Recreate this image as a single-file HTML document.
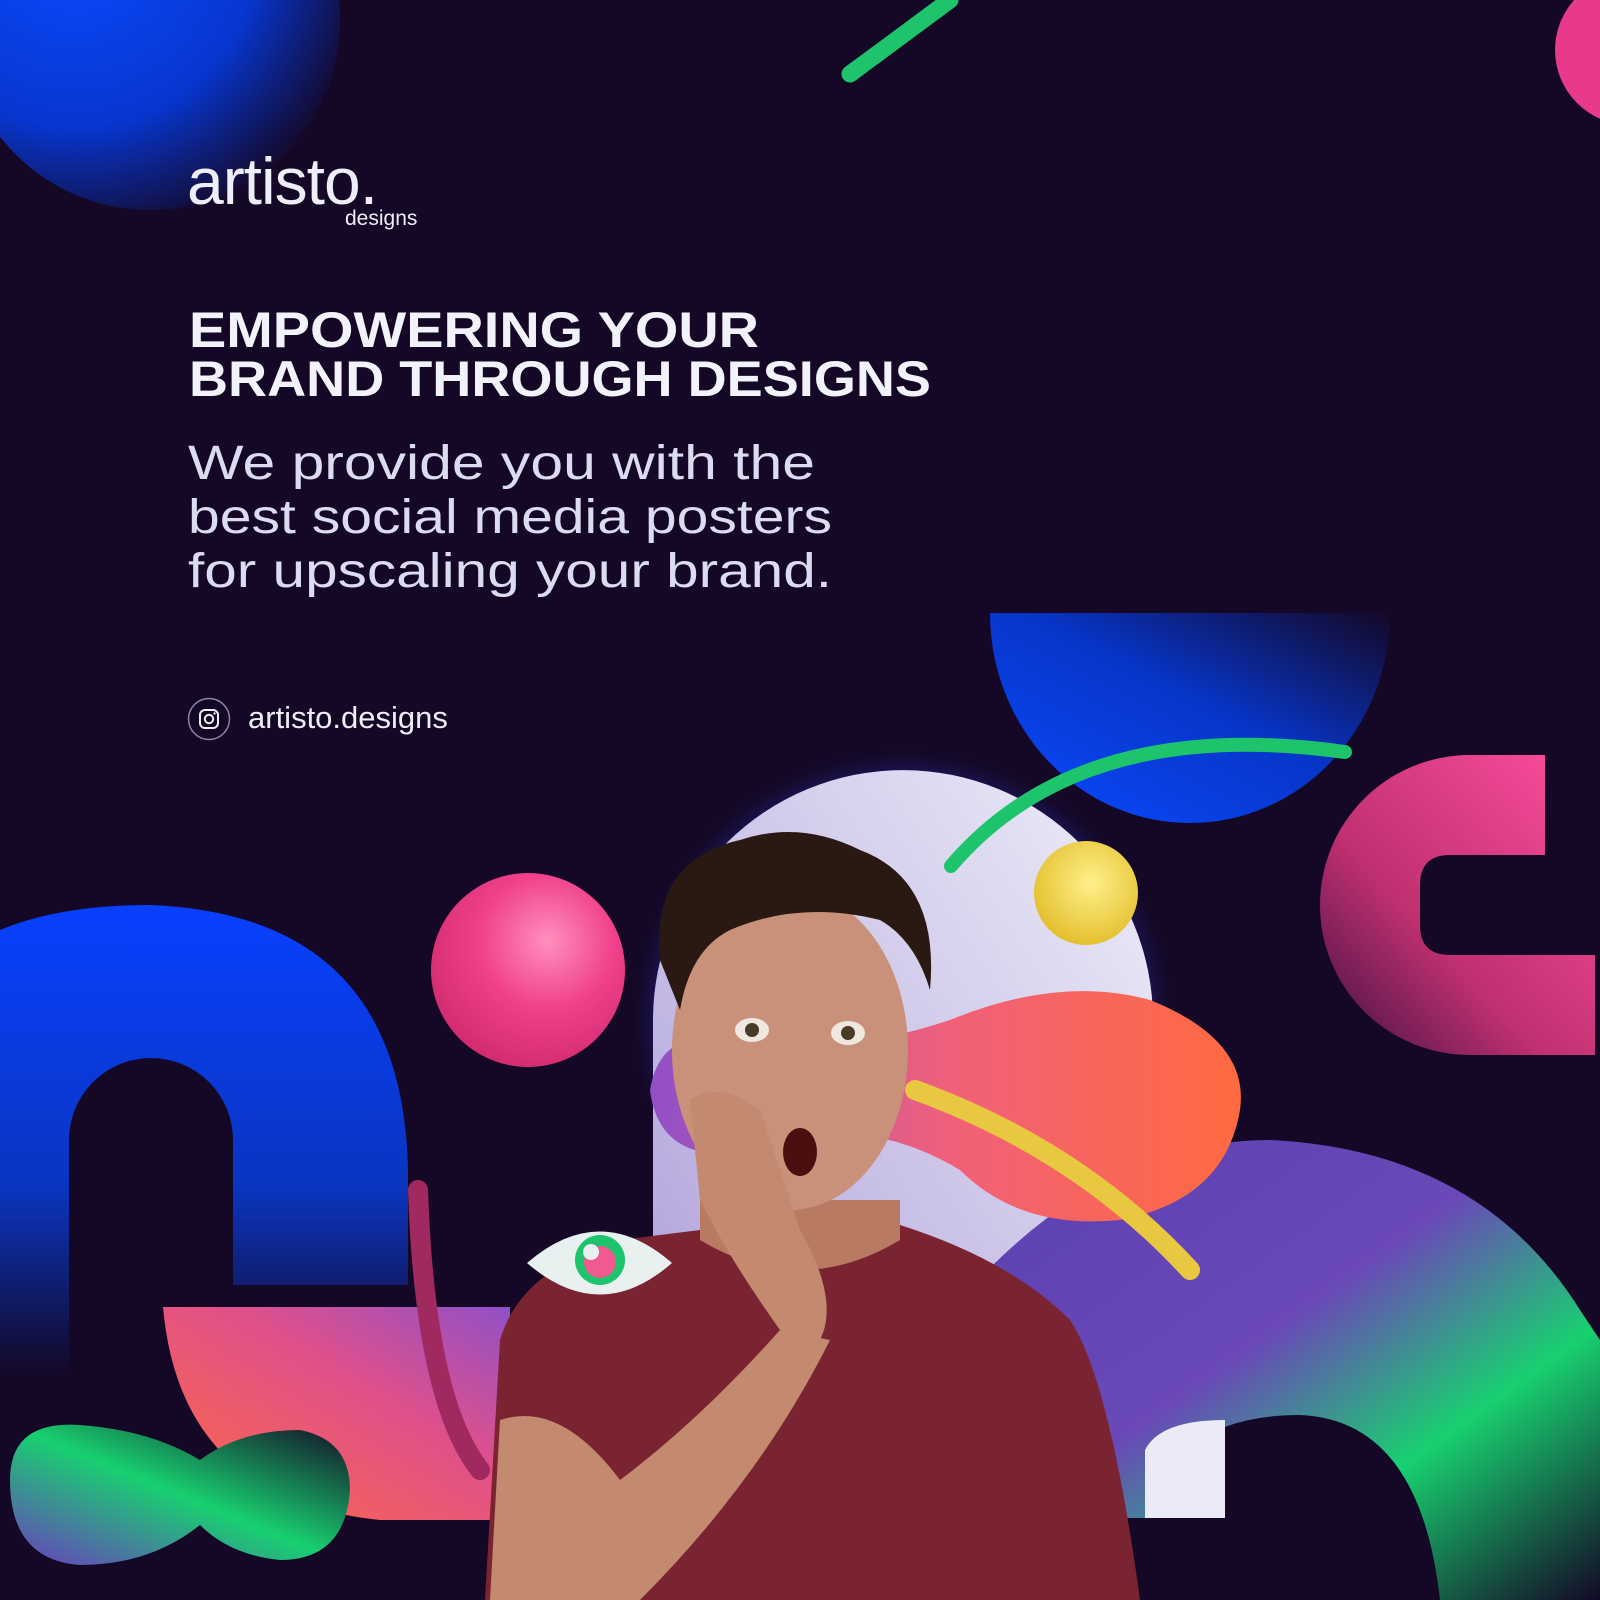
<!DOCTYPE html>
<html><head><meta charset="utf-8"><style>
html,body{margin:0;padding:0;background:#140826;}
svg{display:block}
</style></head><body>
<svg width="1600" height="1600" viewBox="0 0 1600 1600" xmlns="http://www.w3.org/2000/svg">
<defs>
<radialGradient id="gTL" cx="0.3" cy="0.3" r="0.8"><stop offset="0" stop-color="#0a4bff"/><stop offset="0.6" stop-color="#0736d0"/><stop offset="1" stop-color="#140826"/></radialGradient>
<linearGradient id="gBlueTR" x1="0" y1="1" x2="1" y2="0"><stop offset="0" stop-color="#0a4bff"/><stop offset="0.55" stop-color="#0735c8"/><stop offset="1" stop-color="#140826"/></linearGradient>
<linearGradient id="gArch" x1="0" y1="1" x2="1" y2="0"><stop offset="0" stop-color="#a99ad8"/><stop offset="1" stop-color="#eeeef8"/></linearGradient>
<radialGradient id="gPink" cx="0.6" cy="0.35" r="0.7"><stop offset="0" stop-color="#ff8fbf"/><stop offset="0.5" stop-color="#f0408a"/><stop offset="1" stop-color="#d02a6e"/></radialGradient>
<radialGradient id="gYel" cx="0.55" cy="0.4" r="0.7"><stop offset="0" stop-color="#fff08a"/><stop offset="1" stop-color="#e0b820"/></radialGradient>
<linearGradient id="gOrange" x1="0" y1="0.5" x2="1" y2="0.5"><stop offset="0" stop-color="#9050c8"/><stop offset="0.5" stop-color="#f0607a"/><stop offset="1" stop-color="#ff6a40"/></linearGradient>
<linearGradient id="gC" x1="1" y1="0" x2="0" y2="1"><stop offset="0" stop-color="#ff4fa0"/><stop offset="0.6" stop-color="#c03070"/><stop offset="1" stop-color="#3a1040"/></linearGradient>
<linearGradient id="gBlueL" x1="0.5" y1="0" x2="0.5" y2="1"><stop offset="0" stop-color="#0840ff"/><stop offset="0.6" stop-color="#0a35c0"/><stop offset="1" stop-color="#140826"/></linearGradient>
<linearGradient id="gBotL" x1="0" y1="1" x2="1" y2="0"><stop offset="0" stop-color="#ff6a40"/><stop offset="0.6" stop-color="#e0508a"/><stop offset="1" stop-color="#9050c8"/></linearGradient>
<linearGradient id="gGreen" x1="0" y1="1" x2="1" y2="0"><stop offset="0" stop-color="#6a3cc0"/><stop offset="0.5" stop-color="#18d070"/><stop offset="1" stop-color="#140826"/></linearGradient>
<linearGradient id="gBR" x1="0" y1="0" x2="1" y2="1"><stop offset="0" stop-color="#5a40b0"/><stop offset="0.45" stop-color="#6a48b8"/><stop offset="0.7" stop-color="#18d070"/><stop offset="1" stop-color="#140826"/></linearGradient>
<radialGradient id="glow" cx="0.5" cy="0.5" r="0.5"><stop offset="0.85" stop-color="#3040ff" stop-opacity="0.45"/><stop offset="1" stop-color="#140826" stop-opacity="0"/></radialGradient>
</defs>
<rect width="1600" height="1600" fill="#140826"/>
<circle cx="150" cy="20" r="190" fill="url(#gTL)"/>
<path d="M850 74 L950 0" stroke="#1ec46c" stroke-width="17" stroke-linecap="round"/>
<circle cx="1630" cy="50" r="75" fill="#e83a8a"/>
<path d="M990 613 L1390 613 A200 210 0 0 1 990 613 Z" fill="url(#gBlueTR)"/>
<path d="M1545 755 L1470 755 A150 150 0 0 0 1470 1055 L1595 1055 L1595 955 L1450 955 Q1420 955 1420 925 L1420 885 Q1420 855 1450 855 L1545 855 Z" fill="url(#gC)"/>
<circle cx="903" cy="1020" r="275" fill="url(#glow)"/>
<path d="M653 1520 L653 1020 A250 250 0 0 1 1153 1020 L1153 1520 Z" fill="url(#gArch)"/>
<path d="M960 1300 Q1100 1140 1270 1140 Q1480 1150 1580 1310 L1600 1340 L1600 1600 L1440 1600 Q1420 1420 1300 1415 Q1170 1415 1150 1520 L960 1520 Z" fill="url(#gBR)"/>
<path d="M1145 1520 L1145 1450 Q1160 1420 1225 1420 L1225 1520 Z" fill="#eceaf6"/>
<path d="M650 1090 Q660 1030 720 1040 Q830 1060 950 1020 Q1060 975 1150 1000 Q1250 1040 1240 1110 Q1225 1200 1120 1220 Q1020 1230 960 1170 Q860 1110 760 1150 Q660 1170 650 1090 Z" fill="url(#gOrange)"/>
<path d="M915 1090 Q1080 1150 1190 1270" stroke="#e8c840" stroke-width="20" fill="none" stroke-linecap="round"/>
<path d="M951 866 Q1080 715 1345 752" stroke="#1ec46c" stroke-width="14" fill="none" stroke-linecap="round"/>
<circle cx="1086" cy="893" r="52" fill="url(#gYel)"/>
<circle cx="528" cy="970" r="97" fill="url(#gPink)"/>
<path d="M0 930 Q60 905 150 905 Q408 915 408 1180 L408 1285 L233 1285 L233 1140 A82 82 0 0 0 69 1140 L69 1375 L0 1375 Z" fill="url(#gBlueL)"/>
<path d="M163 1307 L510 1307 L510 1520 L380 1520 Q180 1500 163 1307 Z" fill="url(#gBotL)"/>
<path d="M418 1190 Q425 1400 480 1470" stroke="#a02a60" stroke-width="20" fill="none" stroke-linecap="round"/>
<path d="M10 1480 Q10 1420 80 1425 Q150 1430 200 1460 Q240 1430 300 1430 Q350 1440 350 1490 Q345 1560 280 1560 Q230 1555 200 1525 Q150 1565 80 1565 Q10 1560 10 1480 Z" fill="url(#gGreen)"/>
<path d="M820 1600 Q860 1520 960 1518 L1270 1518 L1270 1600 Z" fill="#140826"/>
<path d="M485 1600 L500 1340 Q520 1270 620 1240 L740 1225 L900 1225 Q1010 1260 1070 1320 Q1110 1380 1140 1600 Z" fill="#7a2432"/>
<path d="M700 1200 L700 1240 Q800 1300 900 1240 L900 1200 Z" fill="#b87a60"/>
<ellipse cx="790" cy="1050" rx="118" ry="160" fill="#c9917a"/>
<path d="M660 960 Q650 860 740 840 Q800 820 860 850 Q940 880 930 990 Q915 940 880 920 Q800 900 730 930 Q690 950 680 1010 Z" fill="#2a1812"/>
<ellipse cx="752" cy="1030" rx="17" ry="12" fill="#f0e8e0"/><circle cx="752" cy="1030" r="7" fill="#4a3a2a"/>
<ellipse cx="848" cy="1033" rx="17" ry="12" fill="#f0e8e0"/><circle cx="848" cy="1033" r="7" fill="#4a3a2a"/>
<ellipse cx="800" cy="1152" rx="17" ry="24" fill="#4a1010"/>
<path d="M690 1100 Q720 1080 760 1110 L800 1230 Q840 1300 820 1340 L780 1330 Q730 1260 700 1200 Z" fill="#c48a70"/>
<path d="M500 1420 Q560 1400 620 1480 Q700 1420 780 1330 L830 1340 Q760 1480 640 1600 L490 1600 Z" fill="#c48a70"/>
<path d="M527 1263 Q600 1200 672 1263 Q600 1326 527 1263 Z" fill="#e8f0f0"/>
<circle cx="600" cy="1260" r="25" fill="#1ec46c"/><circle cx="600" cy="1262" r="16" fill="#f05a90"/><circle cx="591" cy="1252" r="8" fill="#e8f0f0"/>
<text x="187" y="204" font-family="Liberation Sans, sans-serif" font-size="66" fill="#eeeef8" letter-spacing="-1">artisto.</text>
<text x="345" y="225" font-family="Liberation Sans, sans-serif" font-size="21" fill="#eeeef8">designs</text>
<text x="189" y="347" font-family="Liberation Sans, sans-serif" font-weight="bold" font-size="50" fill="#f2f2fa" textLength="570" lengthAdjust="spacingAndGlyphs">EMPOWERING YOUR</text>
<text x="189" y="396" font-family="Liberation Sans, sans-serif" font-weight="bold" font-size="50" fill="#f2f2fa" textLength="742" lengthAdjust="spacingAndGlyphs">BRAND THROUGH DESIGNS</text>
<g font-family="Liberation Sans, sans-serif" font-size="48" fill="#dcdcf0">
<text x="188" y="479" textLength="627" lengthAdjust="spacingAndGlyphs">We provide you with the</text>
<text x="188" y="533" textLength="644" lengthAdjust="spacingAndGlyphs">best social media posters</text>
<text x="188" y="587" textLength="644" lengthAdjust="spacingAndGlyphs">for upscaling your brand.</text>
</g>
<circle cx="209" cy="719" r="20.5" fill="none" stroke="#8a86a8" stroke-width="1.5"/>
<rect x="200" y="710" width="18" height="18" rx="5" fill="none" stroke="#eeeef8" stroke-width="2"/>
<circle cx="209" cy="719" r="4.2" fill="none" stroke="#eeeef8" stroke-width="2"/>
<circle cx="214.5" cy="713.5" r="1.2" fill="#eeeef8"/>
<text x="248" y="728" font-family="Liberation Sans, sans-serif" font-size="31" fill="#eeeef8">artisto.designs</text>
</svg>
</body></html>
